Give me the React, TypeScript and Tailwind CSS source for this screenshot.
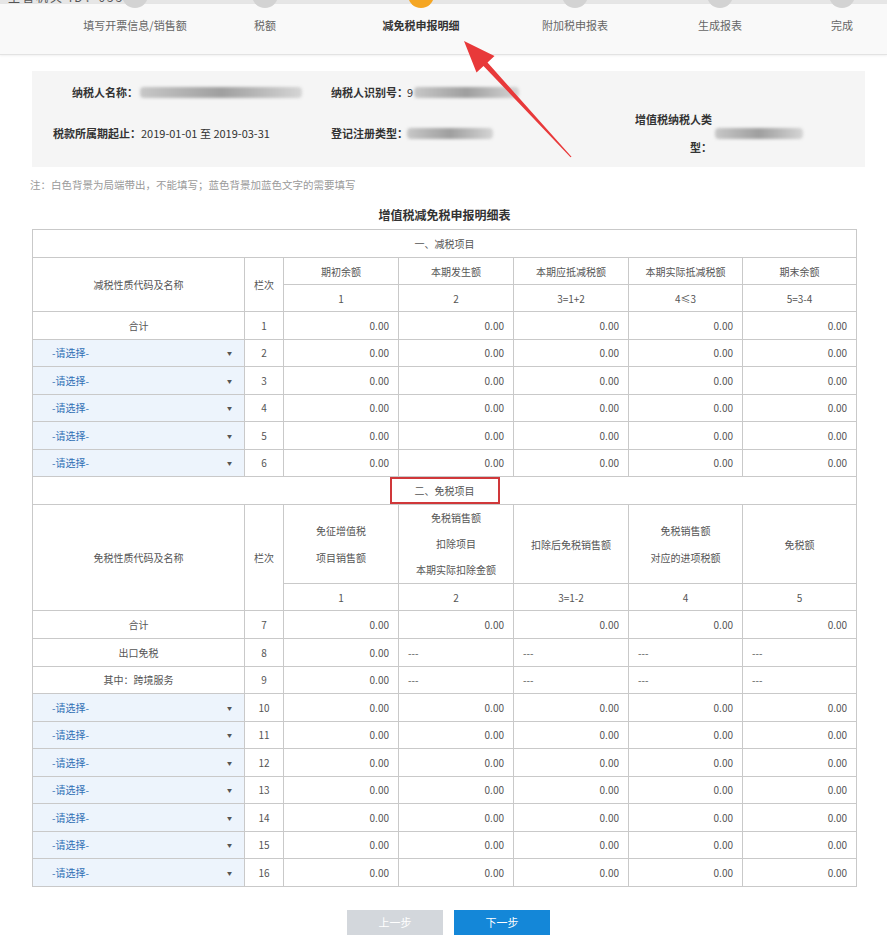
const steps = [
  { label: '填写开票信息/销售额', w: 'w-[130px]', active: false },
  { label: '税额', w: 'w-[130px]', active: false },
  { label: '减免税申报明细', w: 'w-[182px]', active: true },
  { label: '附加税申报表', w: 'w-[126px]', active: false },
  { label: '生成报表', w: 'w-[164px]', active: false },
  { label: '完成', w: 'w-[80px]', active: false },
];

const td = 'border border-[#c9c9c9] text-[10px] text-[#555]';
const amt = `${td} text-right pr-[9px] text-[#9a9a9a]`;

function SelectCell() {
  return (
    <td className={`${td} bg-[#edf4fc]`}>
      <div className="flex items-center justify-between pl-[19px] pr-[12px]">
        <span className="text-[#2f6fb5]">-请选择-</span>
        <span className="text-[5px] text-[#555]">▼</span>
      </div>
    </td>
  );
}

function Amounts({ dash = false }: { dash?: boolean }) {
  return (
    <>
      <td className={amt}>0.00</td>
      {[0, 1, 2, 3].map(i =>
        dash ? (
          <td key={i} className={`${td} pl-[9px]`}>---</td>
        ) : (
          <td key={i} className={amt}>0.00</td>
        )
      )}
    </>
  );
}

function Blur({ w }: { w: string }) {
  return <div className={`${w} h-[11px] bg-linear-to-r from-[#c7c7c7] via-[#9f9f9f] to-[#d5d5d5] blur-[1.5px] rounded-sm`} />;
}

export default function App() {
  return (
    <div className="relative w-[887px] min-h-[944px] bg-white font-['Noto_Sans_CJK_SC',sans-serif] overflow-hidden">
      {/* top strip, cut off */}
      <div className="h-[4px] bg-[#e6e6e6] overflow-hidden">
        <div className="-mt-[12px] pl-[8px] text-[12px] text-[#555] tracking-[2px]">主管机关 ID：0559</div>
      </div>

      {/* steps */}
      <div className="h-[51px] bg-[#f9f9f9] border-b border-[#e3e3e3] shadow-[0_1px_2px_rgba(0,0,0,0.06)] flex pl-[70px]">
        {steps.map(s => (
          <div key={s.label} className={`${s.w} relative flex justify-center pt-[13px]`}>
            <div
              className={`absolute -top-[22px] left-1/2 -translate-x-1/2 w-[26px] h-[26px] rounded-full ${
                s.active ? 'bg-[#f5a623]' : 'bg-[#d3d3d3]'
              }`}
            />
            <span className={`text-[11px] whitespace-nowrap ${s.active ? 'font-bold text-[#333]' : 'text-[#666]'}`}>
              {s.label}
            </span>
          </div>
        ))}
      </div>

      {/* info panel */}
      <div className="mt-[16px] ml-[32px] mr-[22px] h-[96px] bg-[#f5f5f5] pt-[8px] text-[11px] text-[#333]">
        <div className="flex h-[26px] items-center">
          <div className="w-[106px] text-right font-bold">纳税人名称：</div>
          <div className="w-[193px] pl-[2px]"><Blur w="w-[162px]" /></div>
          <div className="w-[76px] font-bold whitespace-nowrap">纳税人识别号：</div>
          <div className="flex items-center gap-[1px]">
            <span>9</span>
            <Blur w="w-[105px]" />
          </div>
        </div>
        <div className="flex h-[56px] items-center">
          <div className="w-[299px] pl-[21px] whitespace-nowrap">
            <span className="font-bold">税款所属期起止：</span>2019-01-01 至 2019-03-31
          </div>
          <div className="w-[76px] font-bold whitespace-nowrap">登记注册类型：</div>
          <div className="w-[225px]"><Blur w="w-[86px]" /></div>
          <div className="w-[80px] text-right font-bold leading-[28px]">增值税纳税人类型：</div>
          <div className="pl-[3px]"><Blur w="w-[88px]" /></div>
        </div>
      </div>

      <div className="mt-[11px] pl-[30px] text-[10.5px] text-[#9a9a9a] leading-[14px]">
        注：白色背景为局端带出，不能填写；蓝色背景加蓝色文字的需要填写
      </div>

      <div className="mt-[16px] mb-[7px] text-center text-[12px] font-bold text-[#333] leading-[14px] pl-[2px]">
        增值税减免税申报明细表
      </div>

      <table className="ml-[32px] w-[824px] border-collapse table-fixed">
        <colgroup>
          <col className="w-[212px]" />
          <col className="w-[39px]" />
          <col className="w-[115px]" />
          <col className="w-[115px]" />
          <col className="w-[115px]" />
          <col className="w-[114px]" />
          <col className="w-[114px]" />
        </colgroup>
        <tbody>
          <tr className="h-[28px]">
            <td colSpan={7} className={`${td} text-center`}>一、减税项目</td>
          </tr>
          <tr className="h-[27px]">
            <td rowSpan={2} className={`${td} text-center`}>减税性质代码及名称</td>
            <td rowSpan={2} className={`${td} text-center`}>栏次</td>
            {['期初余额', '本期发生额', '本期应抵减税额', '本期实际抵减税额', '期末余额'].map(h => (
              <td key={h} className={`${td} text-center`}>{h}</td>
            ))}
          </tr>
          <tr className="h-[27px]">
            {['1', '2', '3=1+2', '4≤3', '5=3-4'].map(h => (
              <td key={h} className={`${td} text-center`}>{h}</td>
            ))}
          </tr>
          <tr className="h-[27.5px]">
            <td className={`${td} text-center`}>合计</td>
            <td className={`${td} text-center`}>1</td>
            <Amounts />
          </tr>
          {[2, 3, 4, 5, 6].map(n => (
            <tr key={n} className="h-[27.5px]">
              <SelectCell />
              <td className={`${td} text-center`}>{n}</td>
              <Amounts />
            </tr>
          ))}
          <tr className="h-[28px]">
            <td colSpan={7} className={`${td} text-center`}>
              <span className="inline-block w-[110px] h-[27px] leading-[23px] border-2 border-[#d0383a]">二、免税项目</span>
            </td>
          </tr>
          <tr className="h-[78px]">
            <td rowSpan={2} className={`${td} text-center`}>免税性质代码及名称</td>
            <td rowSpan={2} className={`${td} text-center`}>栏次</td>
            <td className={`${td} text-center leading-[27px]`}>免征增值税<br />项目销售额</td>
            <td className={`${td} text-center leading-[26px]`}>免税销售额<br />扣除项目<br />本期实际扣除金额</td>
            <td className={`${td} text-center`}>扣除后免税销售额</td>
            <td className={`${td} text-center leading-[27px]`}>免税销售额<br />对应的进项税额</td>
            <td className={`${td} text-center`}>免税额</td>
          </tr>
          <tr className="h-[27px]">
            {['1', '2', '3=1-2', '4', '5'].map(h => (
              <td key={h} className={`${td} text-center`}>{h}</td>
            ))}
          </tr>
          <tr className="h-[28px]">
            <td className={`${td} text-center`}>合计</td>
            <td className={`${td} text-center`}>7</td>
            <Amounts />
          </tr>
          <tr className="h-[27.5px]">
            <td className={`${td} text-center`}>出口免税</td>
            <td className={`${td} text-center`}>8</td>
            <Amounts dash />
          </tr>
          <tr className="h-[27.5px]">
            <td className={`${td} text-center`}>其中：跨境服务</td>
            <td className={`${td} text-center`}>9</td>
            <Amounts dash />
          </tr>
          {[10, 11, 12, 13, 14, 15, 16].map(n => (
            <tr key={n} className="h-[27.5px]">
              <SelectCell />
              <td className={`${td} text-center`}>{n}</td>
              <Amounts />
            </tr>
          ))}
        </tbody>
      </table>

      <div className="mt-[23px] flex justify-center gap-[11px] pl-[10px]">
        <button className="w-[96px] h-[25px] bg-[#d3d7dc] text-white text-[11px]">上一步</button>
        <button className="w-[96px] h-[25px] bg-[#1487d8] text-white text-[11px]">下一步</button>
      </div>

      {/* red arrow annotation */}
      <svg className="absolute left-0 top-0 pointer-events-none" width="887" height="944" viewBox="0 0 887 944">
        <polygon
          points="464,41 494.5,56 487.5,62.5 571.5,156.7 570.5,157.3 483.5,66 476.5,72.5"
          fill="#e8393a"
        />
      </svg>
    </div>
  );
}
